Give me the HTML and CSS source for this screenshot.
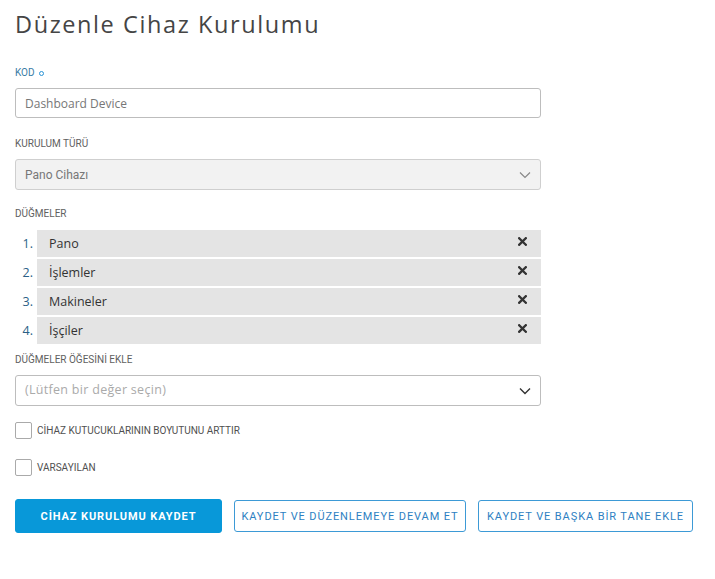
FILE: index.html
```html
<!DOCTYPE html>
<html lang="tr">
<head>
<meta charset="utf-8">
<link rel="stylesheet" href="styles.css">
</head>
<body>
<div class="page">
  <h1 class="title">Düzenle Cihaz Kurulumu</h1>

  <div class="field f-kod">
    <div class="label label-req">KOD <span class="req"></span></div>
    <div class="input">Dashboard Device</div>
  </div>

  <div class="field f-tur">
    <div class="label">KURULUM TÜRÜ</div>
    <div class="select disabled"><span>Pano Cihazı</span>
      <svg class="chev" width="12" height="8" viewBox="0 0 12 8"><path d="M1 1.5 L6 6.5 L11 1.5" fill="none" stroke="#888" stroke-width="1.2"/></svg>
    </div>
  </div>

  <div class="field f-dug">
    <div class="label">DÜĞMELER</div>
    <ol class="list">
      <li class="row"><span class="num">1.</span><span class="item">Pano</span><svg class="x" width="9" height="9" viewBox="0 0 9 9"><path d="M1.2 1.2 L7.8 7.8 M7.8 1.2 L1.2 7.8" stroke="#333" stroke-width="2.3" stroke-linecap="square"/></svg></li>
      <li class="row"><span class="num">2.</span><span class="item">İşlemler</span><svg class="x" width="9" height="9" viewBox="0 0 9 9"><path d="M1.2 1.2 L7.8 7.8 M7.8 1.2 L1.2 7.8" stroke="#333" stroke-width="2.3" stroke-linecap="square"/></svg></li>
      <li class="row"><span class="num">3.</span><span class="item">Makineler</span><svg class="x" width="9" height="9" viewBox="0 0 9 9"><path d="M1.2 1.2 L7.8 7.8 M7.8 1.2 L1.2 7.8" stroke="#333" stroke-width="2.3" stroke-linecap="square"/></svg></li>
      <li class="row"><span class="num">4.</span><span class="item">İşçiler</span><svg class="x" width="9" height="9" viewBox="0 0 9 9"><path d="M1.2 1.2 L7.8 7.8 M7.8 1.2 L1.2 7.8" stroke="#333" stroke-width="2.3" stroke-linecap="square"/></svg></li>
    </ol>
  </div>

  <div class="field f-ekle">
    <div class="label">DÜĞMELER ÖĞESİNİ EKLE</div>
    <div class="select"><span class="ph">(Lütfen bir değer seçin)</span>
      <svg class="chev" width="12" height="8" viewBox="0 0 12 8"><path d="M1 1.5 L6 6.5 L11 1.5" fill="none" stroke="#333" stroke-width="1.4"/></svg>
    </div>
  </div>

  <label class="check c1"><span class="box"></span><span class="clabel">CİHAZ KUTUCUKLARININ BOYUTUNU ARTTIR</span></label>
  <label class="check c2"><span class="box"></span><span class="clabel">VARSAYILAN</span></label>

  <div class="buttons">
    <button class="btn primary">CİHAZ KURULUMU KAYDET</button>
    <button class="btn outline b2">KAYDET VE DÜZENLEMEYE DEVAM ET</button>
    <button class="btn outline b3">KAYDET VE BAŞKA BİR TANE EKLE</button>
  </div>
</div>
</body>
</html>
```

FILE: styles.css
```css
* { box-sizing: border-box; }
html, body { margin: 0; padding: 0; background: #fff; }
body { font-family: "Open Sans", "Noto Sans", sans-serif; color: #333; }

.page {
  padding: 8px 0 0 15px;
  width: 715px;
}

.title {
  margin: 0;
  font-family: "Open Sans", sans-serif;
  font-weight: 400;
  font-size: 23.5px;
  line-height: 32px;
  letter-spacing: 1.6px;
  color: #454545;
  height: 32px;
}

.field { width: 526px; }
.f-kod { margin-top: 26px; }
.f-tur { margin-top: 19px; }
.f-dug { margin-top: 17px; }
.f-ekle { margin-top: 9px; }
.f-dug .label { margin-bottom: 9px; }

.label {
  font-family: "Roboto", sans-serif;
  font-size: 10px;
  line-height: 14px;
  height: 14px;
  color: #606060;
  margin-bottom: 8px;
  display: flex;
  align-items: center;
}
.label-req { color: #3a7ca5; }
.req {
  display: inline-block;
  width: 5px; height: 5px;
  border: 1.3px solid #2a93d5;
  border-radius: 50%;
  margin-left: 4px;
}

.input, .select {
  height: 30px;
  border: 1px solid #bdbdbd;
  border-radius: 3px;
  padding: 0 9px;
  display: flex;
  align-items: center;
  font-size: 12px;
  color: #777;
}
.input { font-family: "Open Sans", sans-serif; }
.select { height: 31px; justify-content: space-between; padding-right: 9px; }
.select.disabled {
  background: #f2f2f2;
  border-color: #cfcfcf;
  font-family: "Roboto", sans-serif;
  color: #777;
}
.ph { font-family: "Open Sans", sans-serif; color: #aaa; font-size: 12.5px; letter-spacing: 0.3px; margin-top: -2px; }

.list {
  list-style: none;
  margin: 0; padding: 0;
  display: flex; flex-direction: column;
  gap: 2px;
}
.row {
  display: flex;
  align-items: center;
  height: 27px;
  position: relative;
}
.num {
  width: 22px;
  text-align: right;
  padding-right: 4px;
  font-size: 12.5px;
  color: #2b5f86;
}
.item {
  flex: 1;
  background: #e4e4e4;
  height: 27px;
  display: flex;
  align-items: center;
  padding-left: 12px;
  font-size: 12.5px;
  color: #333;
}
.x {
  position: absolute;
  right: 14px;
  top: 7px;
}

.check {
  display: flex;
  align-items: center;
  height: 18px;
}
.c1 { margin-top: 15px; }
.c2 { margin-top: 19px; }
.box {
  width: 17px; height: 17px;
  border: 1px solid #aaa;
  border-radius: 2px;
  background: #fff;
  margin-right: 5px;
}
.clabel {
  font-family: "Roboto", sans-serif;
  font-size: 10px;
  color: #505050;
}

.buttons {
  display: flex;
  gap: 12px;
  margin-top: 23px;
}
.btn {
  height: 34px;
  border-radius: 3px;
  font-family: "Roboto", sans-serif;
  font-size: 11px;
  letter-spacing: 0.9px;
  cursor: pointer;
  padding: 0;
}
.primary {
  width: 207px;
  background: #0898d9;
  border: 1px solid #0898d9;
  color: #fff;
  font-weight: 700;
}
.outline {
  background: #fff;
  border: 1px solid #3d9ad6;
  color: #2e7fc2;
  height: 32px;
  margin-top: 1px;
}
.b2 { width: 232px; }
.b3 { width: 215px; }
```
